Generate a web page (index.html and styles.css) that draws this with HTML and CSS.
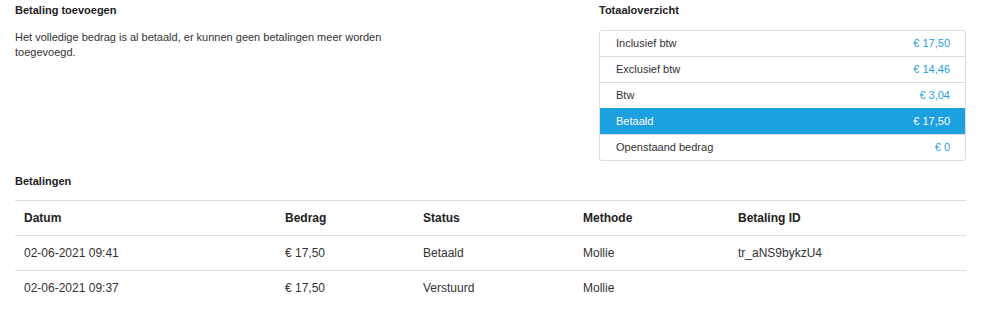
FILE: index.html
```html
<!DOCTYPE html>
<html lang="nl">
<head>
	<meta charset="UTF-8">
	<title>Betalingen</title>
	<link rel="stylesheet" href="styles.css">
</head>
<body>
	<div class="page">
		<div class="top">
			<div class="col-left">
				<h4 class="title">Betaling toevoegen</h4>
				<p class="note">Het volledige bedrag is al betaald, er kunnen geen betalingen meer worden toegevoegd.</p>
			</div>
			<div class="col-right">
				<h4 class="title">Totaaloverzicht</h4>
				<ul class="totals">
					<li><span>Inclusief btw</span><span class="val">€ 17,50</span></li>
					<li><span>Exclusief btw</span><span class="val">€ 14,46</span></li>
					<li><span>Btw</span><span class="val">€ 3,04</span></li>
					<li class="active"><span>Betaald</span><span class="val">€ 17,50</span></li>
					<li><span>Openstaand bedrag</span><span class="val">€ 0</span></li>
				</ul>
			</div>
		</div>

		<h4 class="title title-payments">Betalingen</h4>
		<table class="payments">
			<thead>
				<tr>
					<th class="c-date">Datum</th>
					<th class="c-amount">Bedrag</th>
					<th class="c-status">Status</th>
					<th class="c-method">Methode</th>
					<th>Betaling ID</th>
				</tr>
			</thead>
			<tbody>
				<tr>
					<td>02-06-2021 09:41</td>
					<td>€ 17,50</td>
					<td>Betaald</td>
					<td>Mollie</td>
					<td>tr_aNS9bykzU4</td>
				</tr>
				<tr>
					<td>02-06-2021 09:37</td>
					<td>€ 17,50</td>
					<td>Verstuurd</td>
					<td>Mollie</td>
					<td></td>
				</tr>
			</tbody>
		</table>
	</div>
</body>
</html>
```

FILE: styles.css
```css
body{
	margin: 0;
	background: #fff;
	color: #333;
	font-family: "Liberation Sans", Arial, sans-serif;
}
.page{
	width: 951px;
	padding: 3px 15px 0;
}
.top{
	display: flex;
	justify-content: space-between;
}
.col-left{
	width: 400px;
}
.col-right{
	width: 367px;
}
.title{
	margin: 0 0 13px;
	font-size: 11px;
	line-height: 14px;
	font-weight: bold;
	color: #222;
}
.note{
	margin: 0;
	font-size: 11px;
	line-height: 15px;
}
.totals{
	margin: 0;
	padding: 0;
	list-style: none;
	border: 1px solid #ddd;
	border-radius: 3px;
	overflow: hidden;
}
.totals li{
	display: flex;
	justify-content: space-between;
	padding: 6px 15px 6px 16px;
	font-size: 11px;
	line-height: 13px;
	border-top: 1px solid #ddd;
}
.totals li:first-child{
	border-top: none;
}
.totals .val{
	color: #1ea0e0;
}
.totals li.active{
	background-color: #1da0e0;
	border-top-color: #1da0e0;
	color: #fff;
}
.totals li.active .val{
	color: #fff;
}
.title-payments{
	margin: 13px 0 12px;
}
.payments{
	width: 951px;
	border-collapse: collapse;
	font-size: 12px;
}
.payments th,
.payments td{
	text-align: left;
	padding: 10px 9px;
	line-height: 14px;
	border-top: 1px solid #ddd;
}
.payments th{
	font-weight: bold;
	color: #222;
}
.payments thead tr{
	border-bottom: 1px solid #ddd;
}
.payments td{
	height: 14px;
}
.c-date{ width: 243px; }
.c-amount{ width: 120px; }
.c-status{ width: 142px; }
.c-method{ width: 137px; }
```
